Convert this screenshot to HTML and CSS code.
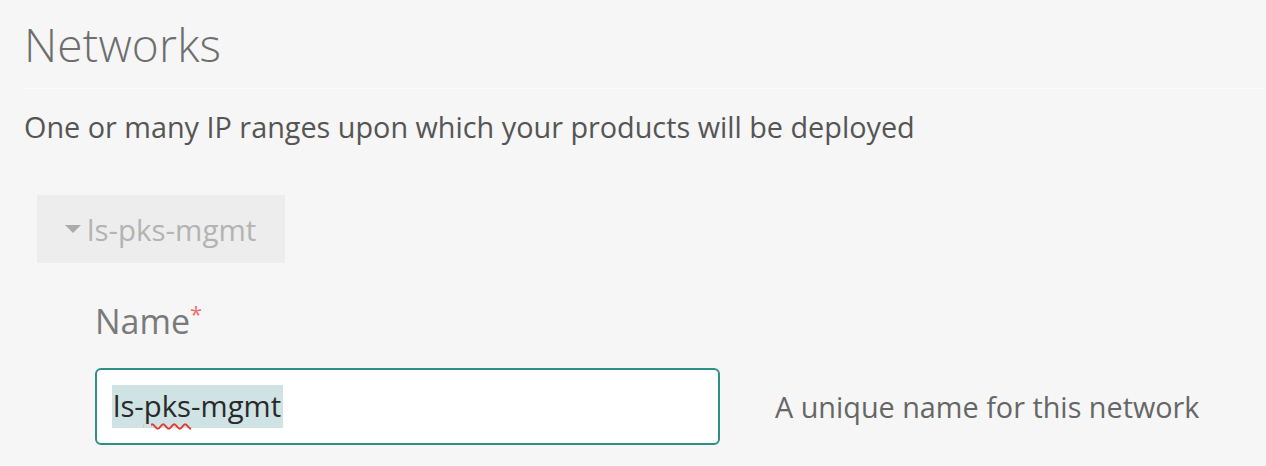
FILE: index.html
```html
<!DOCTYPE html>
<html>
<head>
<meta charset="utf-8">
<link rel="stylesheet" href="styles.css">
</head>
<body>
<div class="page">
  <h1 class="title">Networks</h1>
  <div class="rule"></div>
  <p class="desc">One or many IP ranges upon which your products will be deployed</p>
  <div class="toggle"><span class="caret"></span><span class="toggle-text">ls-pks-mgmt</span></div>
  <div class="field">
    <div class="label">Name<span class="req">*</span></div>
    <div class="row">
      <div class="input"><span class="sel">ls-<span class="typo">pks</span>-mgmt</span></div>
      <div class="hint">A unique name for this network</div>
    </div>
  </div>
</div>
</body>
</html>
```

FILE: styles.css
```css
html, body { margin: 0; padding: 0; }
body {
  background: #f6f6f6;
  font-family: "Open Sans", "Noto Sans", sans-serif;
  width: 1266px;
  height: 466px;
  overflow: hidden;
}
.page { padding: 0 0 0 24px; }
.title {
  margin: 0;
  padding-top: 14px;
  font-weight: 300;
  font-size: 46px;
  line-height: 60px;
  color: #6e6e6e;
  letter-spacing: 0.2px;
}
.rule {
  margin-top: 14px;
  height: 1px;
  width: 1240px;
  background: #fbfbfb;
}
.desc {
  margin: 18px 0 0 0;
  font-size: 28.8px;
  line-height: 40px;
  color: #555;
}
.toggle {
  margin: 48px 0 0 13px;
  width: 248px;
  height: 68px;
  background: #ededed;
  display: flex;
  align-items: center;
  padding-left: 28px;
  box-sizing: border-box;
  color: #b3b3b3;
  font-size: 29.5px;
}
.caret {
  width: 0; height: 0;
  border-left: 8px solid transparent;
  border-right: 8px solid transparent;
  border-top: 8px solid #ababab;
  margin-right: 6px;
}
.field { margin-left: 71px; }
.label {
  margin-top: 28px;
  font-size: 34px;
  line-height: 44px;
  color: #7a7a7a;
}
.req { color: #f06f6f; font-size: 22px; vertical-align: 12px; }
.row { display: flex; align-items: center; margin-top: 25px; }
.input {
  width: 625px;
  height: 77px;
  box-sizing: border-box;
  border: 2px solid #2f8f86;
  border-radius: 6px;
  background: #fff;
  display: flex;
  align-items: center;
  padding-left: 15px;
}
.sel {
  background: #cfe3e4;
  color: #2a2a2a;
  font-size: 29.3px;
  line-height: 43px;
  padding: 0 2px 0 1px;
}
.typo {
  text-decoration: underline wavy #e53935;
  text-decoration-thickness: 1.5px;
  text-underline-offset: 6px;
}
.hint {
  margin-left: 55px;
  font-size: 28.8px;
  color: #666;
}
```
